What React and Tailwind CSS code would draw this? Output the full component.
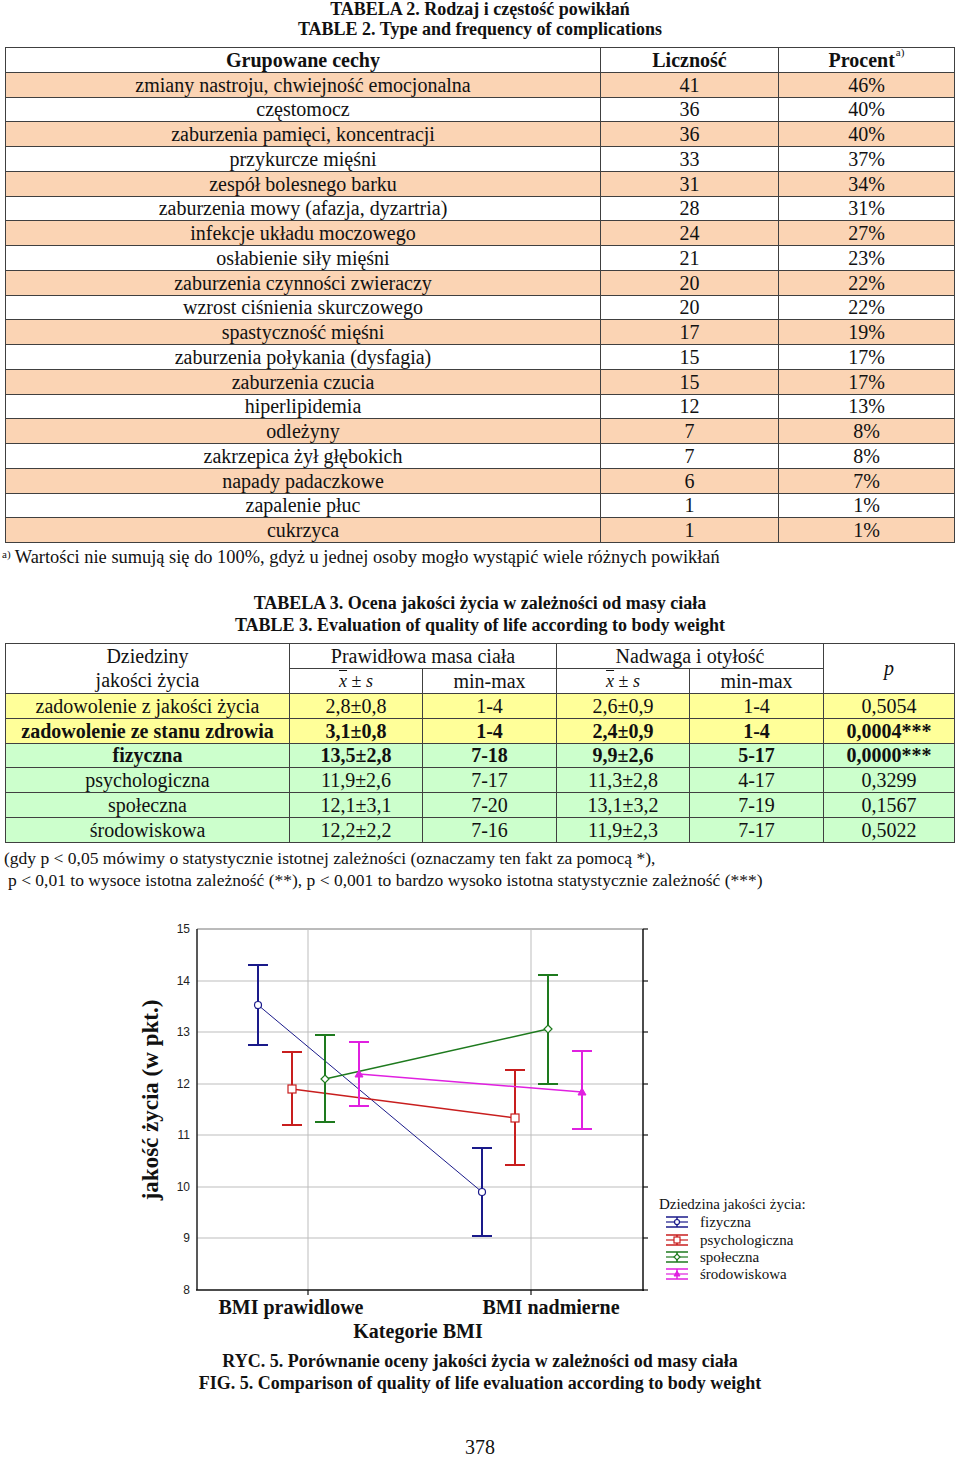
const table2 = [
  ["zmiany nastroju, chwiejność emocjonalna", "41", "46%"],
  ["częstomocz", "36", "40%"],
  ["zaburzenia pamięci, koncentracji", "36", "40%"],
  ["przykurcze mięśni", "33", "37%"],
  ["zespół bolesnego barku", "31", "34%"],
  ["zaburzenia mowy (afazja, dyzartria)", "28", "31%"],
  ["infekcje układu moczowego", "24", "27%"],
  ["osłabienie siły mięśni", "21", "23%"],
  ["zaburzenia czynności zwieraczy", "20", "22%"],
  ["wzrost ciśnienia skurczowego", "20", "22%"],
  ["spastyczność mięśni", "17", "19%"],
  ["zaburzenia połykania (dysfagia)", "15", "17%"],
  ["zaburzenia czucia", "15", "17%"],
  ["hiperlipidemia", "12", "13%"],
  ["odleżyny", "7", "8%"],
  ["zakrzepica żył głębokich", "7", "8%"],
  ["napady padaczkowe", "6", "7%"],
  ["zapalenie płuc", "1", "1%"],
  ["cukrzyca", "1", "1%"],
];

const table3 = [
  { cells: ["zadowolenie z jakości życia", "2,8±0,8", "1-4", "2,6±0,9", "1-4", "0,5054"], bg: "bg-[#ffff99]", bold: false },
  { cells: ["zadowolenie ze stanu zdrowia", "3,1±0,8", "1-4", "2,4±0,9", "1-4", "0,0004***"], bg: "bg-[#ffff99]", bold: true },
  { cells: ["fizyczna", "13,5±2,8", "7-18", "9,9±2,6", "5-17", "0,0000***"], bg: "bg-[#ccffcc]", bold: true },
  { cells: ["psychologiczna", "11,9±2,6", "7-17", "11,3±2,8", "4-17", "0,3299"], bg: "bg-[#ccffcc]", bold: false },
  { cells: ["społeczna", "12,1±3,1", "7-20", "13,1±3,2", "7-19", "0,1567"], bg: "bg-[#ccffcc]", bold: false },
  { cells: ["środowiskowa", "12,2±2,2", "7-16", "11,9±2,3", "7-17", "0,5022"], bg: "bg-[#ccffcc]", bold: false },
];

// chart series, page coordinates: [x, mean, top, bottom]
const series = [
  { name: "fizyczna", color: "#1a1a8a", line: 1, marker: "circle", pts: [[258, 1004, 964, 1044], [482, 1191, 1147, 1235]] },
  { name: "psychologiczna", color: "#c81e1e", line: 1.5, marker: "square", pts: [[292, 1088, 1051, 1124], [515, 1117, 1069, 1164]] },
  { name: "społeczna", color: "#1e7a1e", line: 1.5, marker: "diamond", pts: [[325, 1078, 1034, 1121], [548, 1028, 974, 1083]] },
  { name: "środowiskowa", color: "#e020e0", line: 1.5, marker: "triangle", pts: [[359, 1073, 1041, 1105], [582, 1091, 1050, 1128]] },
];

const yTicks = [
  [15, 928], [14, 980], [13, 1031], [12, 1083], [11, 1134], [10, 1186], [9, 1237], [8, 1289],
];

function Marker({ type, x, y, color, size = 4 }) {
  if (type === "circle") return <circle cx={x} cy={y} r={size - 0.5} fill="#fff" stroke={color} strokeWidth="1.2" />;
  if (type === "square") return <rect x={x - size} y={y - size} width={size * 2} height={size * 2} fill="#fff" stroke={color} strokeWidth="1.2" />;
  if (type === "diamond")
    return <polygon points={`${x},${y - size} ${x + size},${y} ${x},${y + size} ${x - size},${y}`} fill="#fff" stroke={color} strokeWidth="1.2" />;
  return <polygon points={`${x},${y - size} ${x + size},${y + size - 1} ${x - size},${y + size - 1}`} fill={color} stroke={color} strokeWidth="1" />;
}

function Chart() {
  return (
    <svg width="960" height="459" className="block">
      <g transform="translate(0,-890)">
        {/* grid */}
        {yTicks.slice(1, 7).map(([v, y]) => (
          <line key={v} x1="197" x2="643" y1={y} y2={y} stroke="#bdbdbd" strokeWidth="1" />
        ))}
        <line x1="197" x2="643" y1="928" y2="928" stroke="#777" strokeWidth="1" />
        <line x1="308" x2="308" y1="928" y2="1289" stroke="#bdbdbd" strokeWidth="1" />
        <line x1="531" x2="531" y1="928" y2="1289" stroke="#bdbdbd" strokeWidth="1" />
        {/* axes */}
        <line x1="197" x2="197" y1="928" y2="1289" stroke="#222" strokeWidth="1.5" />
        <line x1="643" x2="643" y1="928" y2="1290" stroke="#111" strokeWidth="1.5" />
        <line x1="196" x2="644" y1="1289" y2="1289" stroke="#111" strokeWidth="1.5" />
        {yTicks.map(([v, y]) => (
          <g key={v}>
            <line x1="643" x2="648" y1={y} y2={y} stroke="#111" strokeWidth="1.2" />
            <text x="190" y={y + 4} textAnchor="end" fontSize="12" fill="#222" fontFamily="'Liberation Sans', Arial, sans-serif">
              {v}
            </text>
          </g>
        ))}
        <line x1="308" x2="308" y1="1289" y2="1294" stroke="#111" strokeWidth="1.2" />
        <line x1="531" x2="531" y1="1289" y2="1294" stroke="#111" strokeWidth="1.2" />

        {/* series */}
        {series.map((s) => (
          <g key={s.name}>
            <line x1={s.pts[0][0]} y1={s.pts[0][1]} x2={s.pts[1][0]} y2={s.pts[1][1]} stroke={s.color} strokeWidth={s.line} />
            {s.pts.map(([x, m, t, b]) => (
              <g key={x}>
                <line x1={x} x2={x} y1={t} y2={b} stroke={s.color} strokeWidth="2" />
                <line x1={x - 10} x2={x + 10} y1={t} y2={t} stroke={s.color} strokeWidth="2" />
                <line x1={x - 10} x2={x + 10} y1={b} y2={b} stroke={s.color} strokeWidth="2" />
                <Marker type={s.marker} x={x} y={m} color={s.color} />
              </g>
            ))}
          </g>
        ))}

        {/* axis titles */}
        <text
          transform="translate(158,1099) rotate(-90)"
          textAnchor="middle"
          fontSize="23"
          fontWeight="bold"
          fill="#111"
          fontFamily="'Liberation Serif', 'Times New Roman', serif"
        >
          jakość życia (w pkt.)
        </text>
        <g fontFamily="'Liberation Serif', 'Times New Roman', serif" fontWeight="bold" fontSize="20" fill="#111" textAnchor="middle">
          <text x="291" y="1313">BMI prawidlowe</text>
          <text x="551" y="1313">BMI nadmierne</text>
          <text x="418" y="1337">Kategorie BMI</text>
        </g>

        {/* legend */}
        <g fontFamily="'Liberation Serif', 'Times New Roman', serif" fontSize="15" fill="#111">
          <text x="659" y="1208">Dziedzina jakości życia:</text>
          {series.map((s, i) => {
            const cy = [1221, 1239, 1256, 1273][i];
            return (
              <g key={s.name}>
                <line x1="666" x2="688" y1={cy - 5} y2={cy - 5} stroke={s.color} strokeWidth="1.5" />
                <line x1="666" x2="688" y1={cy + 5} y2={cy + 5} stroke={s.color} strokeWidth="1.5" />
                <line x1="666" x2="688" y1={cy} y2={cy} stroke={s.color} strokeWidth="1.2" />
                <line x1="677" x2="677" y1={cy - 5} y2={cy + 5} stroke={s.color} strokeWidth="1.5" />
                <Marker type={s.marker} x={677} y={cy} color={s.color} size={3} />
                <text x="700" y={cy + 5}>{s.name}</text>
              </g>
            );
          })}
        </g>
      </g>
    </svg>
  );
}

export default function App() {
  return (
    <div className="w-[960px] h-[1458px] overflow-hidden bg-white text-[#111] font-['Liberation_Serif','Times_New_Roman',serif]">
      <div className="text-center text-[18px] font-bold">
        <p className="leading-[19px]">TABELA 2. Rodzaj i częstość powikłań</p>
        <p className="leading-[20px]">TABLE 2. Type and frequency of complications</p>
      </div>

      <div className="ml-[5px] mt-[8px] grid w-[950px] grid-cols-[595px_178px_1fr] auto-rows-[24.75px] border-l border-t border-[#404040] text-[20px] leading-[22px]">
        {["Grupowane cechy", "Liczność"].map((h) => (
          <div key={h} className="flex items-center justify-center border-b border-r border-[#404040] font-bold">
            {h}
          </div>
        ))}
        <div className="flex items-center justify-center border-b border-r border-[#404040] font-bold">
          Procent<sup className="ml-[1px] -translate-y-[2px] text-[11px] font-normal">a)</sup>
        </div>
        {table2.map((row, i) =>
          row.map((cell, j) => (
            <div
              key={`${i}-${j}`}
              className={`flex items-center justify-center border-b border-r border-[#404040] ${i % 2 === 0 ? "bg-[#fbd4b4]" : "bg-white"}`}
            >
              {cell}
            </div>
          ))
        )}
      </div>

      <p className="mt-[4px] pl-[2px] text-[18.4px] leading-[20px]">
        <sup className="text-[11px]">a)</sup> Wartości nie sumują się do 100%, gdyż u jednej osoby mogło wystąpić wiele różnych powikłań
      </p>

      <div className="mt-[25px] text-center text-[18px] font-bold leading-[22px]">
        <p>TABELA 3. Ocena jakości życia w zależności od masy ciała</p>
        <p>TABLE 3. Evaluation of quality of life according to body weight</p>
      </div>

      <div className="ml-[5px] mt-[7px] grid w-[950px] grid-cols-[284px_133px_134px_133px_134px_1fr] auto-rows-[24.875px] border-l border-t border-[#404040] text-[20px] leading-[22px]">
        <div className="row-span-2 flex flex-col items-center justify-center border-b border-r border-[#404040] leading-[24px]">
          <span>Dziedziny</span>
          <span>jakości życia</span>
        </div>
        <div className="col-span-2 flex items-center justify-center border-b border-r border-[#404040]">Prawidłowa masa ciała</div>
        <div className="col-span-2 flex items-center justify-center border-b border-r border-[#404040]">Nadwaga i otyłość</div>
        <div className="row-span-2 flex items-center justify-center border-b border-r border-[#404040] italic">p</div>
        {["xs", "min-max", "xs", "min-max"].map((h, i) => (
          <div key={i} className="flex items-center justify-center border-b border-r border-[#404040]">
            {h === "xs" ? (
              <span className="text-[18px]">
                <span className="italic overline">x</span> ± <span className="italic">s</span>
              </span>
            ) : (
              h
            )}
          </div>
        ))}
        {table3.map((row, i) =>
          row.cells.map((cell, j) => (
            <div
              key={`${i}-${j}`}
              className={`flex items-center justify-center border-b border-r border-[#404040] ${row.bg} ${row.bold ? "font-bold" : ""}`}
            >
              {cell}
            </div>
          ))
        )}
      </div>

      <div className="mt-[4px] text-[17.5px] leading-[22px]">
        <p className="pl-[4px]">(gdy p &lt; 0,05 mówimy o statystycznie istotnej zależności (oznaczamy ten fakt za pomocą *),</p>
        <p className="pl-[8px]">p &lt; 0,01 to wysoce istotna zależność (**), p &lt; 0,001 to bardzo wysoko istotna statystycznie zależność (***)</p>
      </div>

      <Chart />

      <div className="text-center text-[18px] font-bold leading-[22px]">
        <p>RYC. 5. Porównanie oceny jakości życia w zależności od masy ciała</p>
        <p>FIG. 5. Comparison of quality of life evaluation according to body weight</p>
      </div>

      <p className="mt-[41px] text-center text-[20px] leading-[24px]">378</p>
    </div>
  );
}
